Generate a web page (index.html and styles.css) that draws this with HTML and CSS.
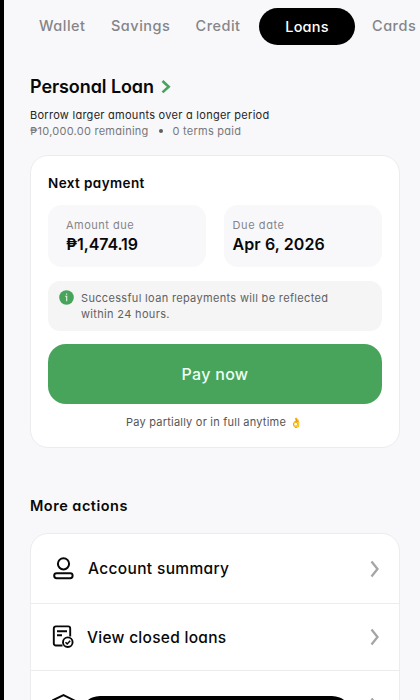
FILE: index.html
```html
<!DOCTYPE html>
<html lang="en">
<head>
<meta charset="utf-8">
<title>Loans</title>
<link rel="stylesheet" href="styles.css">
</head>
<body>
<div class="screen">
  <nav class="tabs">
    <span class="tab t-wallet">Wallet</span>
    <span class="tab t-savings">Savings</span>
    <span class="tab t-credit">Credit</span>
    <span class="tab active">Loans</span>
    <span class="tab t-cards">Cards</span>
  </nav>
  <main>
    <h1><span>Personal Loan</span><svg width="10" height="14" viewBox="0 0 10 14"><path d="M1.5 1 7.7 6.7l-6.2 5.7" fill="none" stroke="#48a35b" stroke-width="2.6"/></svg></h1>
    <p class="tagline">Borrow larger amounts over a longer period</p>
    <p class="status"><span class="remaining">₱10,000.00 remaining</span><i class="dot"></i><span class="terms">0 terms paid</span></p>

    <section class="card payment">
      <h2>Next payment</h2>
      <div class="facts">
        <div class="fact"><span class="label amount-label">Amount due</span><strong class="amount">₱1,474.19</strong></div>
        <div class="fact due"><span class="label date-label">Due date</span><strong class="date">Apr 6, 2026</strong></div>
      </div>
      <div class="notice">
        <svg width="15" height="15" viewBox="0 0 15 15"><circle cx="7.5" cy="7.5" r="7.3" fill="#48a35b"/><path d="M6.2 6.3h1.5v5M7.6 3.4v1.3" fill="none" stroke="#e4f5e7" stroke-width="1.1"/></svg>
        <p>Successful loan repayments will be reflected<br>within 24 hours.</p>
      </div>
      <button class="pay">Pay now</button>
      <p class="hint"><span class="hint-text">Pay partially or in full anytime</span><span class="emoji">👌</span></p>
    </section>

    <h2 class="more">More actions</h2>
    <section class="card actions">
      <div class="row">
        <svg class="icon" width="24" height="26" viewBox="0 0 24 26"><g fill="none" stroke="#080808" stroke-width="2"><circle cx="11.5" cy="7.8" r="5.6"/><rect x="2.2" y="17.2" width="18.4" height="5" rx="2.4"/></g></svg>
        <span class="summary">Account summary</span>
        <svg class="chevron" width="10" height="18" viewBox="0 0 10 18"><path d="m1.5 1.5 6 7.5-6 7.5"/></svg>
      </div>
      <div class="row second">
        <svg class="icon" width="24" height="26" viewBox="0 0 24 26"><g fill="none" stroke="#080808" stroke-width="1.9"><path d="M10.5 21.5H3.8a2 2 0 0 1-2-2V4.4a2 2 0 0 1 2-2h12.4a2 2 0 0 1 2 2v8"/><path d="M5 7.2h10M5 11.3h5"/><circle cx="15.8" cy="18.2" r="4.8"/><path d="m13.5 18.2 1.7 1.7 3-3.2" stroke-width="1.5"/></g></svg>
        <span class="closed">View closed loans</span>
        <svg class="chevron" width="10" height="18" viewBox="0 0 10 18"><path d="m1.5 1.5 6 7.5-6 7.5"/></svg>
      </div>
      <div class="row third">
        <svg class="icon" width="26" height="26" viewBox="0 0 26 26"><path d="M.5 7.5 11.5 2l11 5.5v11l-11 5.5-11-5.5z" fill="none" stroke="#080808" stroke-width="2"/></svg>
        <svg class="chevron" width="10" height="18" viewBox="0 0 10 18"><path d="m1.5 1.5 6 7.5-6 7.5"/></svg>
      </div>
    </section>
  </main>
  <div class="dock"></div>
</div>
</body>
</html>
```
FILE: styles.css
```css
* { box-sizing: border-box; }
body { margin: 0; font-family: Inter, "Noto Sans", sans-serif; font-feature-settings: "cv11"; color: #080808; }
h1, h2, p { margin: 0; white-space: nowrap; }
svg { flex: none; display: block; }
.screen { position: relative; width: 420px; height: 700px; overflow: hidden; background: #f8f8fb; border-left: 4px solid #000; }
.tabs { display: flex; align-items: center; height: 52px; padding-left: 35px; }
.tab { flex: none; font-size: 14.5px; font-weight: 500; color: #858588; white-space: nowrap; line-height: 20px; letter-spacing: .5px; }
.t-wallet { width: 72px; }
.t-savings { width: 84.5px; }
.t-credit { width: 63.5px; }
.active { width: 96px; height: 37px; line-height: 37px; border-radius: 19px; background: #000; color: #fff; text-align: center; margin-right: 17px; letter-spacing: .2px; }
main { padding: 23px 20px 0 26px; }
h1 { display: flex; align-items: center; gap: 7px; font-size: 18px; line-height: 24px; font-weight: 600; letter-spacing: -.08px; }
.tagline { margin-top: 8px; font-size: 11px; line-height: 16px; color: #252525; letter-spacing: .27px; }
.status { display: flex; align-items: center; font-size: 11px; line-height: 16px; color: #77777a; letter-spacing: .25px; }
.dot { width: 4px; height: 4px; border-radius: 50%; background: #606063; margin: 0 10px; }
.card { background: #fff; border: 1px solid #ececef; border-radius: 18px; }
.payment { height: 293px; margin-top: 16px; padding: 17px 17px 0; }
h2 { font-size: 13.5px; line-height: 20px; font-weight: 600; letter-spacing: .4px; }
.facts { display: grid; grid-template-columns: 158px 158px; justify-content: space-between; margin-top: 12px; }
.fact { height: 62px; border-radius: 14px; background: #f8f8fa; padding: 12px 18px 0; white-space: nowrap; }
.due { padding-left: 8.5px; }
.label, .fact strong { display: block; }
.label { font-size: 11px; line-height: 16px; color: #858588; letter-spacing: .5px; }
.date-label { letter-spacing: .6px; }
.fact strong { font-size: 16px; line-height: 22px; font-weight: 600; }
.amount { letter-spacing: -.1px; }
.date { letter-spacing: .1px; }
.notice { display: flex; gap: 7px; height: 50px; margin-top: 14px; padding: 9px 11px; border-radius: 12px; background: #f5f5f5; font-size: 11px; line-height: 16px; color: #616161; font-feature-settings: normal; letter-spacing: .33px; }
.pay { display: block; width: 100%; height: 60px; margin-top: 13px; border: 0; border-radius: 18px; background: #48a35b; color: #effff1; font: 500 16px/61px Inter, sans-serif; letter-spacing: .3px; padding: 0; }
.hint { display: flex; align-items: center; gap: 4px; margin-top: 10px; padding-left: 78px; font-size: 11px; line-height: 17px; color: #555; font-feature-settings: normal; letter-spacing: .22px; }
.emoji { font-size: 10px; }
.more { margin-top: 48px; font-size: 14.5px; letter-spacing: .5px; }
.actions { margin-top: 17px; height: 210px; }
.row { display: flex; align-items: center; height: 70px; padding: 0 19px 0 21px; border-bottom: 1px solid #ececef; font-size: 15.5px; font-weight: 500; letter-spacing: .35px; }
.second { height: 67px; }
.row span { margin-left: 12px; white-space: nowrap; }
.row .closed { margin-left: 11px; letter-spacing: .28px; }
.chevron { margin-left: auto; fill: none; stroke: #a5a5a5; stroke-width: 2.3; }
.dock { position: absolute; left: 76px; top: 696px; width: 272px; height: 40px; border-radius: 20px; background: #000; }
```
